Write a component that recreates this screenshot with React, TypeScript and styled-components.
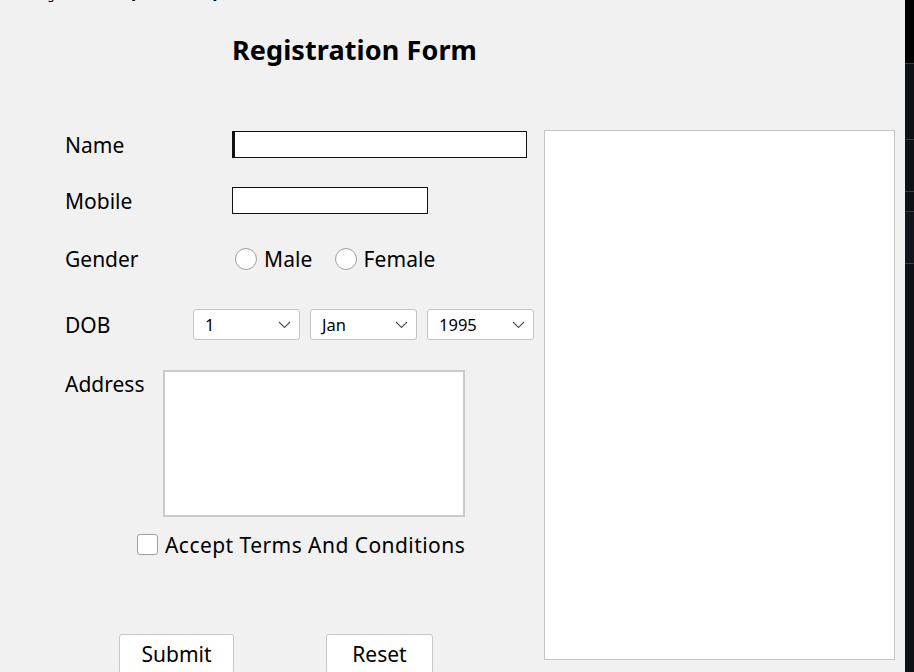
import React from 'react';
import styled, { createGlobalStyle } from 'styled-components';

const Global = createGlobalStyle`
  html, body { margin: 0; padding: 0; background: #f0f0f0; }
  body { font-family: "Noto Sans", "Open Sans", sans-serif; color: #000; }
  * { box-sizing: border-box; }
`;

const Window = styled.div`
  width: 914px;
  height: 672px;
  display: flex;
  overflow: hidden;
  background: #f1f1f1;
`;

const Main = styled.div`
  flex: 1;
  display: flex;
  flex-direction: column;
  min-width: 0;
`;

const TopStrip = styled.div`
  height: 4px;
  overflow: hidden;
  display: flex;
  padding-left: 33px;
  font-size: 12px;
  line-height: 16px;
  white-space: nowrap;
  flex: none;
`;

const StripText = styled.span<{ $ml?: number }>`
  margin-top: -13px;
  margin-left: ${(p) => p.$ml ?? 0}px;
`;

const Title = styled.h1`
  margin: 30px 0 0 232px;
  font-size: 27px;
  line-height: 32px;
  font-weight: 700;
  letter-spacing: 0.1px;
  flex: none;
`;

const Body = styled.div`
  display: flex;
  margin-top: 64px;
`;

const FormCol = styled.div`
  width: 544px;
  flex: none;
  display: flex;
  flex-direction: column;
  padding-top: 1px;
`;

const Row = styled.div<{ $mt: number; $h: number; $pl?: number; $align?: string }>`
  display: flex;
  align-items: ${(p) => p.$align ?? 'center'};
  margin-top: ${(p) => p.$mt}px;
  height: ${(p) => p.$h}px;
  padding-left: ${(p) => p.$pl ?? 65}px;
  flex: none;
`;

const Label = styled.div<{ $w: number }>`
  width: ${(p) => p.$w}px;
  flex: none;
  font-size: 21px;
  line-height: 28px;
`;

const TextBox = styled.input<{ $w: number; $caret?: boolean }>`
  width: ${(p) => p.$w}px;
  height: 27px;
  border: 1px solid #111;
  border-left-width: ${(p) => (p.$caret ? 3 : 1)}px;
  background: #fff;
  outline: none;
  padding: 0 4px;
  font-family: inherit;
  font-size: 16px;
`;

const Options = styled.div`
  display: flex;
  align-items: center;
  gap: 22px;
`;

const Option = styled.label`
  display: flex;
  align-items: center;
  gap: 7px;
  font-size: 21px;
  line-height: 28px;
  letter-spacing: 0.1px;
`;

const RadioCircle = styled.span`
  width: 22px;
  height: 22px;
  border-radius: 50%;
  border: 1.5px solid #a0a0a0;
  background: #fff;
  flex: none;
`;

const Selects = styled.div`
  display: flex;
  gap: 10px;
`;

const SelectBox = styled.div`
  width: 107px;
  height: 31px;
  border: 1.5px solid #c4c4c4;
  border-radius: 3px;
  background: #fff;
  display: flex;
  align-items: center;
  justify-content: space-between;
  padding: 0 8px 0 11px;
  font-size: 16.5px;
`;

const TextArea = styled.textarea`
  width: 302px;
  height: 147px;
  border: 2px solid #cbcbcb;
  background: #fff;
  resize: none;
  outline: none;
  flex: none;
`;

const Check = styled.label`
  display: flex;
  align-items: center;
  gap: 7px;
  font-size: 21px;
  line-height: 28px;
  letter-spacing: 0.45px;
`;

const CheckBox = styled.span`
  width: 21px;
  height: 21px;
  border-radius: 3px;
  border: 1.5px solid #a0a0a0;
  background: #fff;
  flex: none;
`;

const Buttons = styled.div`
  display: flex;
  gap: 92px;
`;

const Button = styled.button<{ $w: number }>`
  width: ${(p) => p.$w}px;
  height: 40px;
  border: 1.5px solid #c8c8c8;
  border-radius: 3px;
  background: #fff;
  font-family: inherit;
  font-size: 21px;
  color: #000;
  padding: 0;
  flex: none;
`;

const Panel = styled.div`
  width: 351px;
  height: 530px;
  border: 1px solid #c4c4c4;
  background: #fff;
  flex: none;
`;

const Side = styled.div`
  width: 9px;
  flex: none;
  display: flex;
  flex-direction: column;
  background: #0d1014;
`;

const SideSeg = styled.div<{ $h: number; $bg?: string }>`
  height: ${(p) => p.$h}px;
  flex: none;
  background: ${(p) => p.$bg ?? '#0d1014'};
  border-bottom: 1px solid #3a3e44;
`;

const Chevron = () => (
  <svg width="13" height="8" viewBox="0 0 13 8" fill="none">
    <path d="M1 1l5.5 5.5L12 1" stroke="#555" strokeWidth="1.2" />
  </svg>
);

export default function App() {
  return (
    <Window>
      <Global />
      <Main>
        <TopStrip>
          <StripText>Registration</StripText>
          <StripText $ml={30}>[Administrator]</StripText>
        </TopStrip>
        <Title>Registration Form</Title>
        <Body>
          <FormCol>
            <Row $mt={0} $h={27}>
              <Label $w={167}>Name</Label>
              <TextBox $w={295} $caret />
            </Row>
            <Row $mt={29} $h={27}>
              <Label $w={167}>Mobile</Label>
              <TextBox $w={196} />
            </Row>
            <Row $mt={33} $h={24}>
              <Label $w={170}>Gender</Label>
              <Options>
                <Option>
                  <RadioCircle />
                  Male
                </Option>
                <Option>
                  <RadioCircle />
                  Female
                </Option>
              </Options>
            </Row>
            <Row $mt={38} $h={31}>
              <Label $w={128}>DOB</Label>
              <Selects>
                <SelectBox>
                  <span>1</span>
                  <Chevron />
                </SelectBox>
                <SelectBox>
                  <span>Jan</span>
                  <Chevron />
                </SelectBox>
                <SelectBox>
                  <span>1995</span>
                  <Chevron />
                </SelectBox>
              </Selects>
            </Row>
            <Row $mt={30} $h={147} $align="flex-start">
              <Label $w={98}>Address</Label>
              <TextArea />
            </Row>
            <Row $mt={17} $h={21} $pl={137}>
              <Check>
                <CheckBox />
                Accept Terms And Conditions
              </Check>
            </Row>
            <Row $mt={79} $h={40} $pl={119}>
              <Buttons>
                <Button $w={115}>Submit</Button>
                <Button $w={107}>Reset</Button>
              </Buttons>
            </Row>
          </FormCol>
          <Panel />
        </Body>
      </Main>
      <Side>
        <SideSeg $h={64} $bg="#000" />
        <SideSeg $h={76} />
        <SideSeg $h={52} />
        <SideSeg $h={20} />
        <SideSeg $h={52} $bg="#12161c" />
      </Side>
    </Window>
  );
}
